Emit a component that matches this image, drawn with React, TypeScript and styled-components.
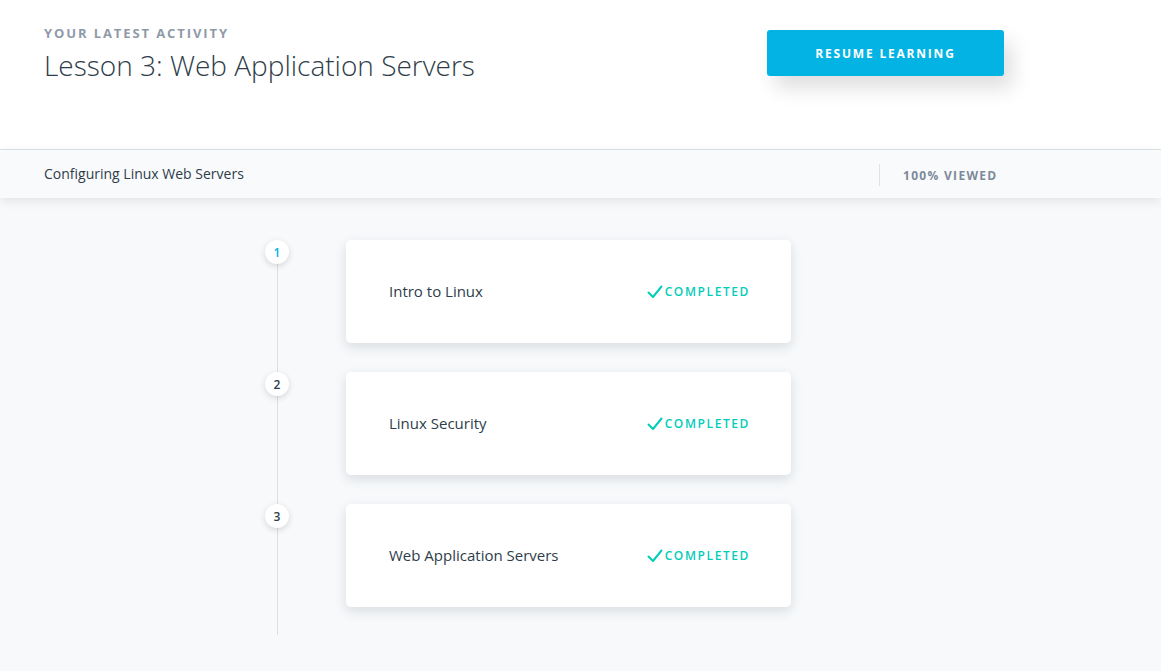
import { FC } from "react";
import styled, { createGlobalStyle } from "styled-components";

const GlobalStyle = createGlobalStyle`
  html, body {
    margin: 0;
    padding: 0;
    background: #f7f9fb;
    font-family: "Open Sans", "Liberation Sans", sans-serif;
    color: #2e3d49;
  }
  * {
    box-sizing: border-box;
  }
`;

const Page = styled.div`
  min-height: 671px;
  background: #f7f9fb;
`;

const Header = styled.header`
  background: #ffffff;
  height: 150px;
  border-bottom: 1px solid #dbe2e8;
`;

const Container = styled.div`
  width: 960px;
  margin-left: 44px;
  display: flex;
  align-items: center;
`;

const HeaderInner = styled(Container)`
  align-items: flex-start;
  padding-top: 26px;
`;

const HeaderText = styled.div`
  flex: 1;
`;

const Eyebrow = styled.p`
  margin: 0;
  font-size: 13px;
  font-weight: 700;
  letter-spacing: 1.9px;
  line-height: 14px;
  text-transform: uppercase;
  color: #8f9aa9;
`;

const Title = styled.h1`
  margin: 7px 0 0;
  font-size: 28px;
  font-weight: 300;
  line-height: 36px;
  color: #2e3d49;
`;

const ResumeButton = styled.button`
  margin-top: 4px;
  width: 237px;
  height: 46px;
  border: none;
  border-radius: 3px;
  background: #02b3e4;
  color: #ffffff;
  font-family: inherit;
  font-size: 12px;
  font-weight: 700;
  letter-spacing: 1.8px;
  text-transform: uppercase;
  box-shadow: 8px 12px 20px rgba(0, 0, 0, 0.13);
  cursor: pointer;
`;

const SubBar = styled.div`
  height: 48px;
  background: #f9fafc;
  box-shadow: 0 3px 10px rgba(0, 0, 0, 0.09);
  display: flex;
  align-items: center;
  position: relative;
`;

const ConceptName = styled.span`
  flex: 1;
  font-size: 14px;
  color: #2e3d49;
  margin-top: -2px;
`;

const Progress = styled.div`
  width: 125px;
  height: 22px;
  border-left: 1px solid #dbe2e8;
  padding-left: 23px;
  display: flex;
  align-items: center;
  font-size: 12px;
  font-weight: 700;
  letter-spacing: 1.3px;
  color: #7d8a99;
  margin-top: 2px;
`;

const Main = styled.main`
  padding: 42px 0 36px 265px;
`;

const Timeline = styled.ol`
  list-style: none;
  margin: 0;
  padding: 0 0 28px;
  display: flex;
  flex-direction: column;
  gap: 29px;
  position: relative;

  &::before {
    content: "";
    position: absolute;
    left: 12px;
    top: 12px;
    bottom: 0;
    width: 1px;
    background: #dbe0e5;
  }
`;

const Step = styled.li`
  display: flex;
  align-items: flex-start;
  gap: 57px;
`;

const Marker = styled.span<{ $active?: boolean }>`
  position: relative;
  z-index: 1;
  width: 24px;
  height: 24px;
  border-radius: 50%;
  background: #ffffff;
  box-shadow: 0 2px 6px rgba(0, 0, 0, 0.14);
  display: flex;
  align-items: center;
  justify-content: center;
  font-size: 12px;
  font-weight: 600;
  color: ${(p) => (p.$active ? "#02b3e4" : "#2e3d49")};
`;

const Card = styled.div`
  width: 445px;
  height: 103px;
  background: #ffffff;
  border-radius: 5px;
  box-shadow: 0 4px 12px rgba(46, 61, 73, 0.15);
  display: flex;
  align-items: center;
  justify-content: space-between;
  padding: 0 41px 0 43px;
`;

const CardTitle = styled.span`
  font-size: 15px;
  color: #2e3d49;
  margin-top: -2px;
`;

const Status = styled.span`
  display: flex;
  align-items: center;
  gap: 2px;
  font-size: 12px;
  font-weight: 600;
  letter-spacing: 1.6px;
  color: #02ccba;
`;

const Check: FC = () => (
  <svg width="16" height="14" viewBox="0 0 16 14" fill="none">
    <path d="M1.5 7.5 L6 12 L14.5 1.5" stroke="#02ccba" strokeWidth="2" strokeLinecap="round" strokeLinejoin="round" />
  </svg>
);

const lessons = ["Intro to Linux", "Linux Security", "Web Application Servers"];

export default function App() {
  return (
    <Page>
      <GlobalStyle />
      <Header>
        <HeaderInner>
          <HeaderText>
            <Eyebrow>Your Latest Activity</Eyebrow>
            <Title>Lesson 3: Web Application Servers</Title>
          </HeaderText>
          <ResumeButton>Resume Learning</ResumeButton>
        </HeaderInner>
      </Header>
      <SubBar>
        <Container>
          <ConceptName>Configuring Linux Web Servers</ConceptName>
          <Progress>100% VIEWED</Progress>
        </Container>
      </SubBar>
      <Main>
        <Timeline>
          {lessons.map((name, i) => (
            <Step key={name}>
              <Marker $active={i === 0}>{i + 1}</Marker>
              <Card>
                <CardTitle>{name}</CardTitle>
                <Status>
                  <Check />
                  COMPLETED
                </Status>
              </Card>
            </Step>
          ))}
        </Timeline>
      </Main>
    </Page>
  );
}
